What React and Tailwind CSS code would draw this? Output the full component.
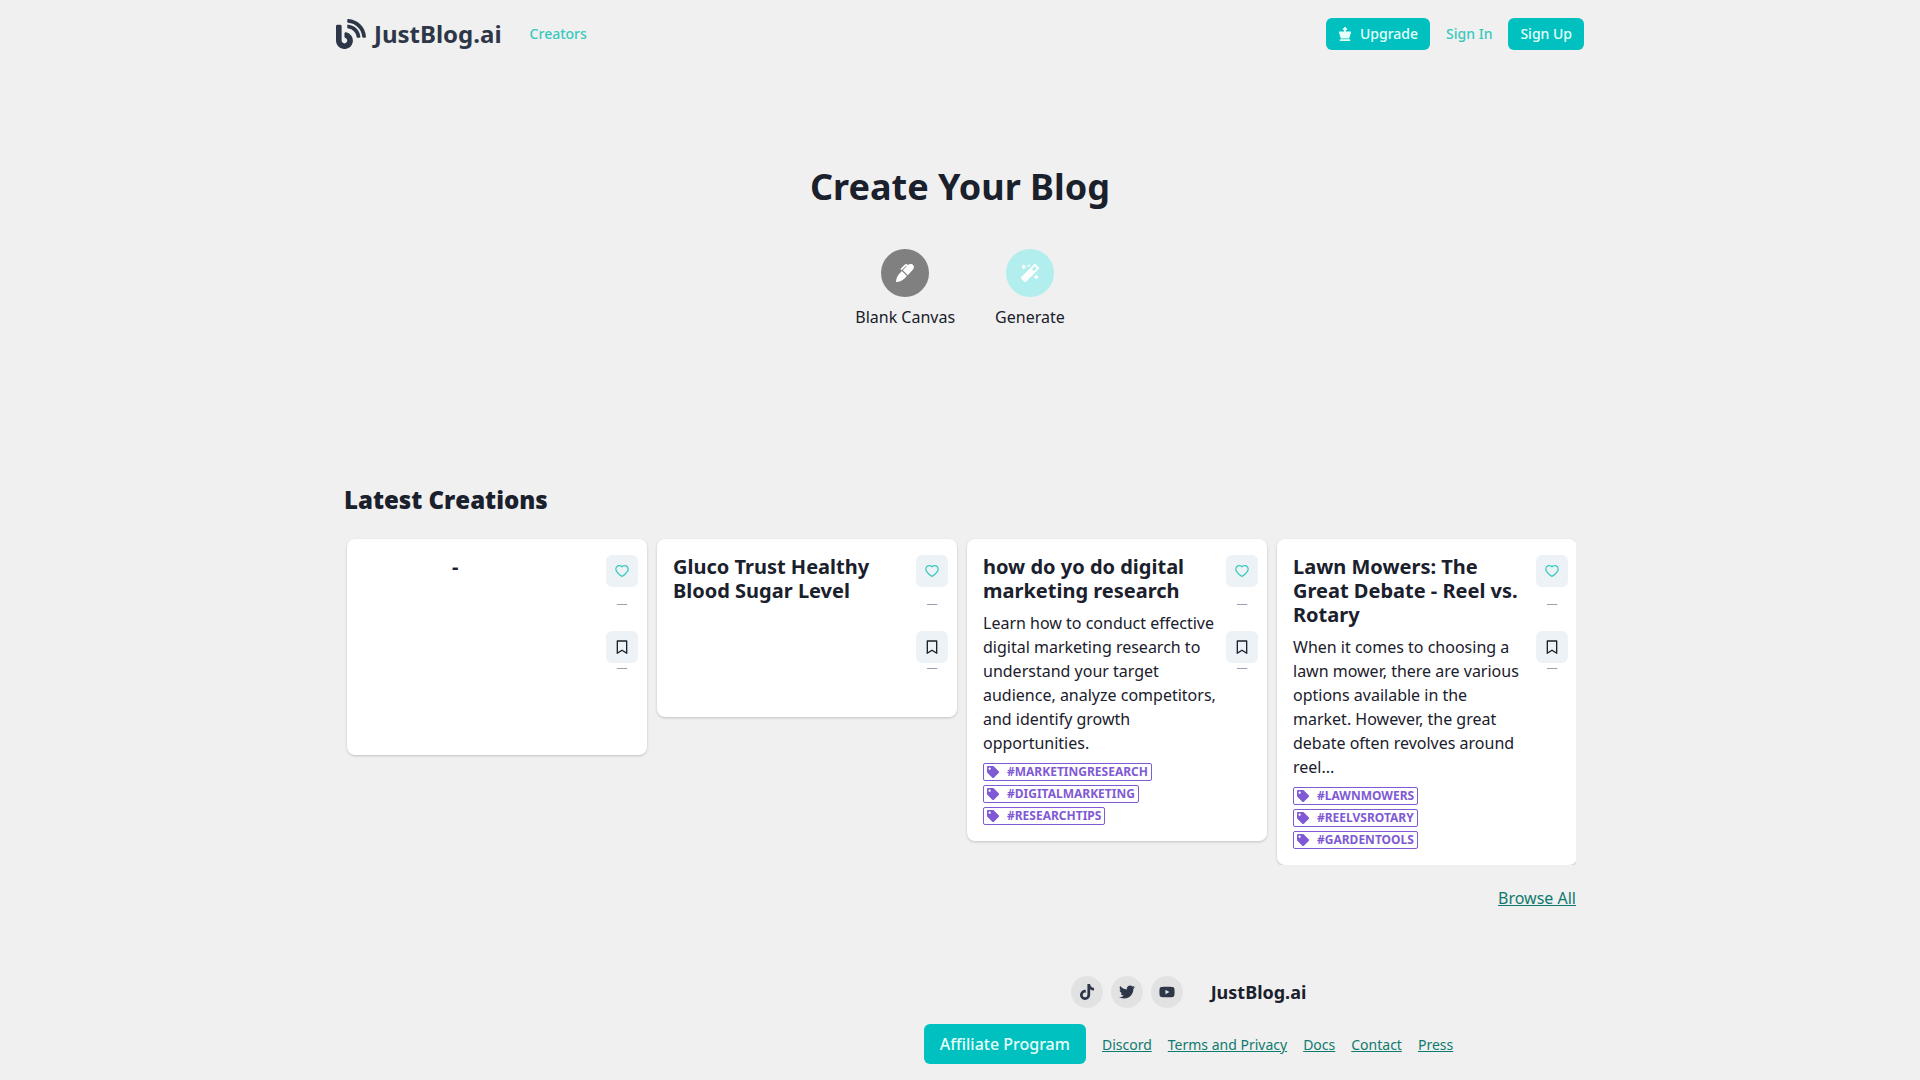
import { FaBlog, FaChessKing, FaMagic, FaTag, FaTiktok, FaTwitter, FaYoutube } from "react-icons/fa";
import { AiOutlineHeart } from "react-icons/ai";
import { RiBookmarkLine } from "react-icons/ri";

const creations = [
  { title: "-", indent: true, height: "min-h-[216px]" },
  { title: "Gluco Trust Healthy Blood Sugar Level", height: "min-h-[178px]" },
  {
    title: "how do yo do digital marketing research",
    description:
      "Learn how to conduct effective digital marketing research to understand your target audience, analyze competitors, and identify growth opportunities.",
    tags: ["#MARKETINGRESEARCH", "#DIGITALMARKETING", "#RESEARCHTIPS"],
  },
  {
    title: "Lawn Mowers: The Great Debate - Reel vs. Rotary",
    description:
      "When it comes to choosing a lawn mower, there are various options available in the market. However, the great debate often revolves around reel...",
    tags: ["#LAWNMOWERS", "#REELVSROTARY", "#GARDENTOOLS"],
  },
];

const socials = [
  { name: "TikTok", Icon: FaTiktok },
  { name: "Twitter", Icon: FaTwitter },
  { name: "YouTube", Icon: FaYoutube },
];

const footerLinks = ["Discord", "Terms and Privacy", "Docs", "Contact", "Press"];

function PenIcon() {
  return (
    <svg width="20" height="20" viewBox="0 0 20 20" fill="currentColor" aria-hidden="true">
      <path d="M1 19c.1-3.600 1.500-6.500 3.800-8.800l2.100-2.100 5 5-2.100 2.100C7.500 17.500 4.600 18.900 1 19Z" />
      <path d="M7.800 7.200l3.900-3.900-.6-.5-4 3.900c-.9.800-2-.3-1.200-1.200l4-3.900c.7-.7 1.700-.7 2.400 0l.6.500c1.300-1.200 3-1.400 4.300-.8 1.900.9 2.300 3.600.8 5.300l-5.200 5.600-5-5Z" />
    </svg>
  );
}

function Header() {
  return (
    <header className="flex items-center justify-between py-[18px]">
      <div className="flex items-center">
        <a href="#" className="flex items-center gap-2 text-[#2d3748]">
          <FaBlog size={30} />
          <span className="text-2xl font-bold">JustBlog.ai</span>
        </a>
        <a href="#" className="ml-7 text-sm font-medium text-[#38c9bd]">
          Creators
        </a>
      </div>

      <div className="flex items-center gap-4 text-sm font-medium">
        <button className="flex h-8 items-center gap-2 rounded-md bg-[#00c1bf] px-3 text-[#e6fffa]">
          <FaChessKing size={14} />
          Upgrade
        </button>
        <a href="#" className="text-[#38c9bd]">
          Sign In
        </a>
        <button className="h-8 rounded-md bg-[#00c1bf] px-3 text-[#e6fffa]">
          Sign Up
        </button>
      </div>
    </header>
  );
}

function CreateBlog() {
  return (
    <section className="flex flex-col items-center pt-[92px]">
      <h1 className="text-4xl leading-[54px] font-bold">Create Your Blog</h1>

      <div className="mt-[35px] flex gap-10">
        <button className="flex flex-col items-center gap-2">
          <span className="flex size-12 items-center justify-center rounded-full bg-[#808080] text-white">
            <PenIcon />
          </span>
          Blank Canvas
        </button>
        <button className="flex flex-col items-center gap-2">
          <span className="flex size-12 items-center justify-center rounded-full bg-[#b2eeed] text-white">
            <FaMagic size={18} />
          </span>
          Generate
        </button>
      </div>
    </section>
  );
}

function CreationCard({ creation }) {
  return (
    <article
      className={`flex w-[300px] shrink-0 rounded-lg bg-white py-4 pr-[9px] pl-4 shadow-[0_1px_3px_rgba(0,0,0,0.12),0_1px_2px_rgba(0,0,0,0.08)] ${creation.height || ""}`}
    >
      <div className="w-[236px]">
        <h3 className={`text-xl leading-6 font-bold ${creation.indent ? "pl-[89px]" : ""}`}>
          {creation.title}
        </h3>

        {creation.description && <p className="mt-2">{creation.description}</p>}

        {creation.tags && (
          <ul className="mt-2 flex flex-col items-start gap-1">
            {creation.tags.map((tag) => (
              <li
                key={tag}
                className="flex h-[18px] items-center gap-2 rounded-xs border border-[#805ad5] px-[3px] text-xs font-bold text-[#805ad5]"
              >
                <FaTag size={12} />
                {tag}
              </li>
            ))}
          </ul>
        )}
      </div>

      <div className="ml-auto flex flex-col items-center text-[11px] text-gray-400">
        <button
          aria-label="Like"
          className="flex size-8 items-center justify-center rounded-md bg-[#edf2f7] text-[#38c9bd]"
        >
          <AiOutlineHeart size={16} />
        </button>
        <span className="mt-1 mb-4 leading-6">—</span>
        <button
          aria-label="Bookmark"
          className="flex size-8 items-center justify-center rounded-md bg-[#edf2f7] text-[#1a202c]"
        >
          <RiBookmarkLine size={16} />
        </button>
        <span className="leading-2">—</span>
      </div>
    </article>
  );
}

function LatestCreations() {
  return (
    <section className="px-2 pt-[153px]">
      <h2 className="font-['Open_Sans',sans-serif] text-2xl leading-9 font-extrabold">
        Latest Creations
      </h2>

      <div className="mt-[18px] flex items-start gap-[10px] overflow-hidden pt-[3px] pl-[3px]">
        {creations.map((creation) => (
          <CreationCard key={creation.title} creation={creation} />
        ))}
      </div>

      <div className="mt-[21px] text-right">
        <a href="#" className="text-[#0f7a6e] underline">
          Browse All
        </a>
      </div>
    </section>
  );
}

function Footer() {
  return (
    <footer className="mt-[66px] flex flex-col items-center gap-4 pb-4 lg:pl-[457px]">
      <div className="flex items-center gap-2">
        {socials.map(({ name, Icon }) => (
          <a
            key={name}
            href="#"
            aria-label={name}
            className="flex size-8 items-center justify-center rounded-full bg-[#e2e2e2] text-[#2d3748]"
          >
            <Icon size={16} />
          </a>
        ))}
        <span className="ml-5 text-lg font-bold">JustBlog.ai</span>
      </div>

      <div className="flex items-center gap-4 text-sm text-[#0f7a6e]">
        <button className="h-10 rounded-md bg-[#00c1bf] px-4 text-base font-medium text-[#e6fffa]">
          Affiliate Program
        </button>
        {footerLinks.map((link) => (
          <a key={link} href="#" className="pt-0.5 underline">
            {link}
          </a>
        ))}
      </div>
    </footer>
  );
}

function App() {
  return (
    <div className="min-h-screen bg-[#f0f0f0] font-['Noto_Sans',sans-serif] text-base text-[#1a202c]">
      <div className="mx-auto max-w-[1248px]">
        <Header />
        <CreateBlog />
        <LatestCreations />
        <Footer />
      </div>
    </div>
  );
}

export default App;
